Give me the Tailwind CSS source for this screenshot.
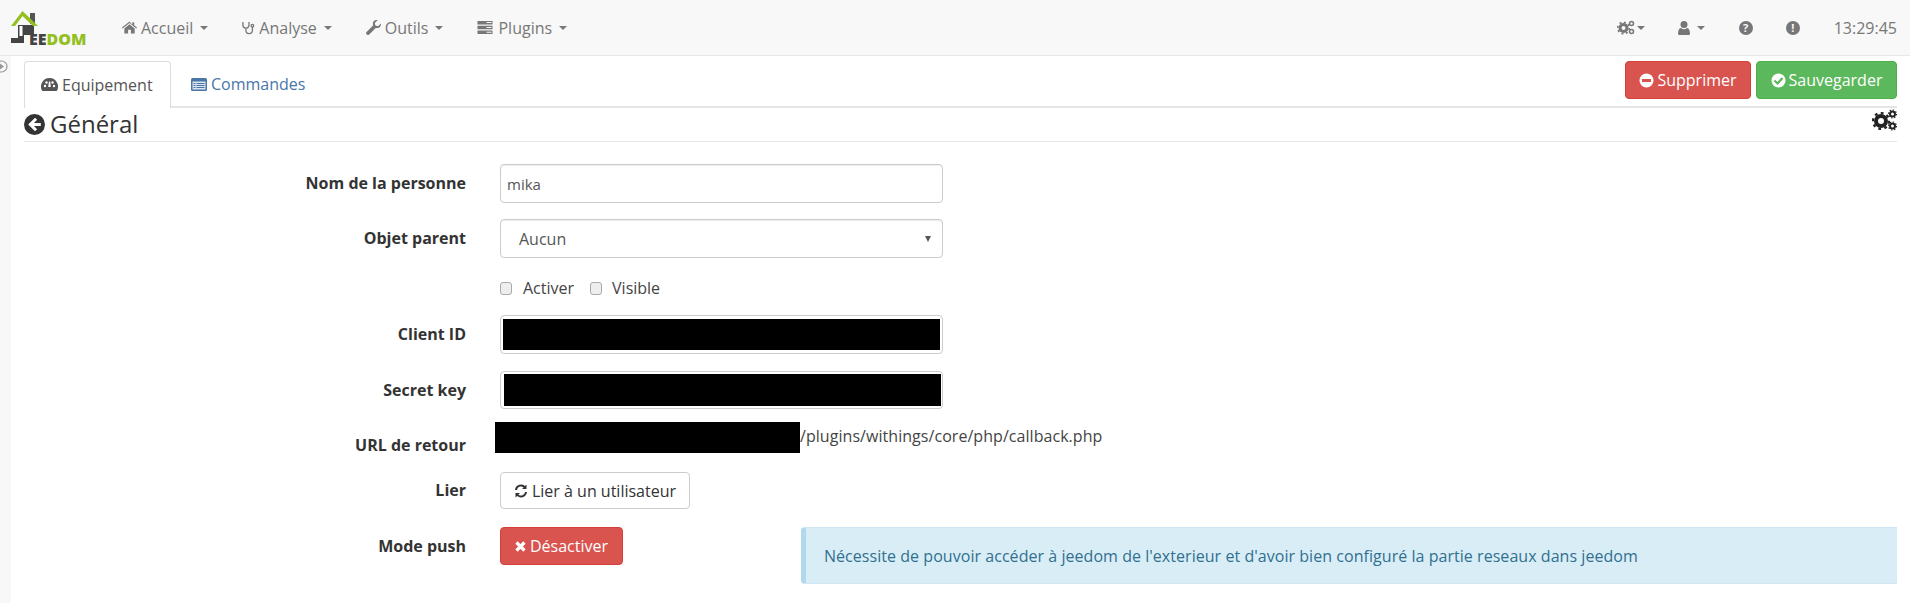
<!DOCTYPE html>
<html lang="fr"><head><meta charset="utf-8"><title>Jeedom</title>
<script src="https://cdn.jsdelivr.net/npm/@tailwindcss/browser@4"></script></head>
<body class="bg-white h-[603px] w-[1910px] overflow-hidden font-['Open_Sans',sans-serif] text-[16px] text-[#333]">
<nav class="h-[56px] bg-[#f8f8f8] border-b border-[#e7e7e7] flex items-center text-[#777] text-[16px] relative">
  <svg class="absolute left-[10px] top-[10px]" width="30" height="34" viewBox="0 0 30 34">
    <rect x="9" y="15" width="15" height="10" fill="#444"/><rect x="20" y="3" width="5" height="11" fill="#555"/>
    <path d="M1 16 L12.500 1 L28 16 L23 16 L12.500 6 L5 16Z" fill="#93c01f"/>
    <path d="M8 15h6v18H1v-5h7z" fill="#444"/><rect x="9.500" y="16" width="3" height="10" fill="#fff"/>
  </svg>
  <span class="absolute left-[29px] top-[29px] font-extrabold text-[#444] text-[16px] leading-[20px]">EE<span class="text-[#93c01f]">DOM</span></span>
  <div class="flex items-center ml-[122px]"><svg width="15" height="13" viewBox="0 0 16 13" fill="#777"><path d="M8 0 0 6.500l.8 1L8 1.800l7.200 5.700.8-1-3-2.400V1h-2v2.500zM2.500 7.500V13h4V9h3v4h4V7.500L8 3z"/></svg><span class="ml-[4px]">Accueil</span><i class="ml-[7px] w-0 h-0 border-x-[4px] border-x-transparent border-t-[4px] border-t-[#777]"></i></div>
  <div class="flex items-center ml-[34px]"><svg width="13" height="15" viewBox="0 0 14 15" fill="none" stroke="#777" stroke-width="1.400"><path d="M1 1.500v4a3.300 3.300 0 0 0 6.500 0v-4M4.200 9v1.500a3.500 3.500 0 0 0 7 0V7"/><circle cx="11.200" cy="5.500" r="1.400"/></svg><span class="ml-[4px]">Analyse</span><i class="ml-[7px] w-0 h-0 border-x-[4px] border-x-transparent border-t-[4px] border-t-[#777]"></i></div>
  <div class="flex items-center ml-[34px]"><svg width="15" height="15" viewBox="0 0 15 15" fill="#777"><path d="M14.800 3.500 12 6.200l-2.600-.7L8.800 3l2.800-2.800C9.500-.4 7.500.6 7 2.500c-.3 1-.1 2 .2 2.800L.6 11.900a1.600 1.600 0 0 0 0 2.300l.3.3a1.600 1.600 0 0 0 2.300 0l6.600-6.600c2.500.9 5.800-1.300 5-4.400z"/></svg><span class="ml-[4px]">Outils</span><i class="ml-[7px] w-0 h-0 border-x-[4px] border-x-transparent border-t-[4px] border-t-[#777]"></i></div>
  <div class="flex items-center ml-[34px]"><svg width="16" height="13" viewBox="0 0 15 13" fill="#777"><path d="M0 0h15v3.500H0zM0 4.700h15v3.500H0zM0 9.500h15V13H0z"/><path d="M9 1h5v1H9zM9 5.900h5v1H9zM9 10.700h5v1H9z" fill="#f8f8f8"/></svg><span class="ml-[5px]">Plugins</span><i class="ml-[7px] w-0 h-0 border-x-[4px] border-x-transparent border-t-[4px] border-t-[#777]"></i></div>
  <div class="ml-auto flex items-center pr-[13px]">
    <svg width="18" height="15" viewBox="0 0 18 15"><circle cx="6.500" cy="8" r="3.500" fill="none" stroke="#777" stroke-width="3"/><circle cx="6.500" cy="8" r="5.800" fill="none" stroke="#777" stroke-width="1.600" stroke-dasharray="2 2.500"/><circle cx="14.500" cy="3.500" r="2" fill="none" stroke="#777" stroke-width="1.500"/><circle cx="14.500" cy="11.500" r="2" fill="none" stroke="#777" stroke-width="1.500"/></svg>
    <i class="ml-[2px] w-0 h-0 border-x-[4px] border-x-transparent border-t-[4px] border-t-[#777]"></i>
    <svg class="ml-[33px]" width="12" height="14" viewBox="0 0 12 14" fill="#777"><circle cx="6" cy="3.500" r="3.500"/><path d="M0 12.500C0 9 1.500 7 3 7c1 .8 2 1.200 3 1.200S8 7.800 9 7c1.500 0 3 2 3 5.500 0 1-.7 1.500-1.500 1.500h-9C.7 14 0 13.500 0 12.500z"/></svg>
    <i class="ml-[7px] w-0 h-0 border-x-[4px] border-x-transparent border-t-[4px] border-t-[#777]"></i>
    <span class="ml-[34px] w-[14px] h-[14px] rounded-full bg-[#777] text-[#f8f8f8] text-[11px] font-bold leading-[14px] text-center">?</span>
    <span class="ml-[33px] w-[14px] h-[14px] rounded-full bg-[#777] text-[#f8f8f8] text-[11px] font-bold leading-[14px] text-center">!</span>
    <span class="ml-[34px] text-[16px]">13:29:45</span>
  </div>
</nav>
<div class="flex h-[547px]">
  <aside class="w-[11px] bg-[#f8f8f8] overflow-hidden shrink-0 pt-[4px]"><svg class="ml-[-5px]" width="13" height="13" viewBox="0 0 13 13"><circle cx="6.500" cy="6.500" r="5.500" fill="none" stroke="#999" stroke-width="1.200"/><path d="M5 3.500 9 6.500 5 9.500z" fill="#999"/></svg></aside>
  <main class="flex-1 pl-[13px] pr-[13px]">
    <div class="h-[52px] border-b-2 border-[#e5e5e5] flex pt-[5px] relative">
      <div class="w-[147px] h-[47px] mb-[-2px] border border-b-0 border-[#ddd] rounded-t bg-white flex items-center pb-[1px] pl-[16px] text-[#555] text-[16px]">
        <svg width="17" height="14" viewBox="0 0 17 14" fill="#555"><path d="M8.500 0a8.500 8.500 0 0 0-7.200 13h14.400A8.500 8.500 0 0 0 8.500 0z"/><circle cx="4" cy="8" r="1.200" fill="#fff"/><circle cx="5.500" cy="4.500" r="1.200" fill="#fff"/><circle cx="11.500" cy="4.500" r="1.200" fill="#fff"/><circle cx="13" cy="8" r="1.200" fill="#fff"/><path d="M8 3.500h1.200L9.800 9h-2.600z" fill="#fff"/></svg>
        <span class="ml-[4px]">Equipement</span></div>
      <div class="ml-[20px] flex items-center pb-[1px] text-[#4a76a8] text-[16px] h-[47px]">
        <svg width="16" height="13" viewBox="0 0 16 13"><rect width="16" height="13" rx="1.500" fill="#4a76a8"/><path d="M1.500 3.500h13V11.500h-13z" fill="#dbe5f0"/><path d="M2.500 5h2v1h-2zM5.500 5h8v1h-8zM2.500 7h2v1h-2zM5.500 7h8v1h-8zM2.500 9h2v1h-2zM5.500 9h8v1h-8z" fill="#4a76a8"/></svg>
        <span class="ml-[4px]">Commandes</span></div>
      <div class="ml-auto flex gap-[5px] h-[38px] text-white text-[16px]">
        <button class="w-[126px] rounded bg-[#d9534f] border border-[#d43f3a] flex items-center justify-center gap-[3px]"><svg width="15" height="15" viewBox="0 0 15 15"><circle cx="7.500" cy="7.500" r="7" fill="#fff"/><rect x="3" y="6" width="9" height="3" fill="#d9534f"/></svg>Supprimer</button>
        <button class="w-[141px] rounded bg-[#5cb85c] border border-[#4cae4c] flex items-center justify-center gap-[3px]"><svg width="15" height="15" viewBox="0 0 15 15"><circle cx="7.500" cy="7.500" r="7" fill="#fff"/><path d="M3.500 7.500 6.500 10.500 11.500 5" fill="none" stroke="#5cb85c" stroke-width="2.200"/></svg>Sauvegarder</button>
      </div>
    </div>
    <div class="h-[34px] border-b border-[#e5e5e5] flex items-center relative">
      <svg class="mt-[-1px]" width="21" height="21" viewBox="0 0 20 20"><circle cx="10" cy="10" r="10" fill="#333"/><path d="M10.500 3.500 4 10l6.500 6.500 2-2L9.500 11.500H16v-3H9.500l3-3z" fill="#fff"/></svg>
      <h2 class="ml-[5px] mb-[2px] text-[24px] font-normal text-[#333]">Général</h2>
      <svg class="ml-auto mt-[-10px]" width="25" height="22" viewBox="0 0 25 22"><circle cx="9" cy="12" r="5" fill="none" stroke="#222" stroke-width="4"/><circle cx="9" cy="12" r="8" fill="none" stroke="#222" stroke-width="2.200" stroke-dasharray="2.800 3.400"/><circle cx="20.500" cy="5" r="2.500" fill="none" stroke="#222" stroke-width="2"/><circle cx="20.500" cy="5" r="4" fill="none" stroke="#222" stroke-width="1.200" stroke-dasharray="1.400 1.700"/><circle cx="20.500" cy="17" r="2.500" fill="none" stroke="#222" stroke-width="2"/><circle cx="20.500" cy="17" r="4" fill="none" stroke="#222" stroke-width="1.200" stroke-dasharray="1.400 1.700"/></svg>
    </div>
    <form class="text-[16px]">
      <div class="flex items-center mt-[22px] h-[39px]">
        <label class="w-[442px] text-right font-bold shrink-0 mt-[-1px]">Nom de la personne</label>
        <div class="ml-[34px] w-[443px] h-[39px] border border-[#ccc] rounded flex items-center px-[6px] pt-[1px] text-[#555] text-[15px] shadow-[inset_0_1px_1px_rgba(0,0,0,0.075)]">mika</div>
      </div>
      <div class="flex items-center mt-[16px] h-[39px]">
        <label class="w-[442px] text-right font-bold shrink-0 mt-[-1px]">Objet parent</label>
        <div class="ml-[34px] w-[443px] h-[39px] border border-[#ccc] rounded flex items-center pl-[18px] pr-[11px] text-[#555] shadow-[inset_0_1px_1px_rgba(0,0,0,0.075)]">Aucun<i class="ml-auto w-0 h-0 border-x-[3px] border-x-transparent border-t-[6px] border-t-[#555]"></i></div>
      </div>
      <div class="flex items-center mt-[20px] h-[20px] pl-[476px] text-[#444]">
        <span class="w-[12px] h-[13px] border border-[#aaa] rounded-[3px] bg-[#eee]"></span><span class="ml-[11px]">Activer</span>
        <span class="ml-[16px] w-[12px] h-[13px] border border-[#aaa] rounded-[3px] bg-[#eee]"></span><span class="ml-[10px]">Visible</span>
      </div>
      <div class="flex items-center mt-[17px] h-[39px]">
        <label class="w-[442px] text-right font-bold shrink-0 mt-[-1px]">Client ID</label>
        <div class="ml-[34px] w-[443px] h-[39px] border border-[#ccc] rounded p-[3px]"><div class="h-[31px] mx-[-1px] bg-black"></div></div>
      </div>
      <div class="flex items-center mt-[17px] h-[38px]">
        <label class="w-[442px] text-right font-bold shrink-0 mt-[-1px]">Secret key</label>
        <div class="ml-[34px] w-[443px] h-[38px] border border-[#ccc] rounded p-[2px] pl-[3px] pr-[1px]"><div class="h-[32px] bg-black"></div></div>
      </div>
      <div class="flex items-start mt-[13px] h-[32px]">
        <label class="w-[442px] text-right font-bold shrink-0 mt-[11px]">URL de retour</label>
        <div class="ml-[29px] w-[305px] h-[31px] bg-black shrink-0"></div>
        <span class="mt-[2px] text-[#444] tracking-[0.05px]">/plugins/withings/core/php/callback.php</span>
      </div>
      <div class="flex items-center mt-[18px] h-[37px]">
        <label class="w-[442px] text-right font-bold shrink-0 mt-[-1px]">Lier</label>
        <button type="button" class="ml-[34px] w-[190px] h-[37px] border border-[#ccc] rounded bg-white flex items-center justify-center gap-[4px] text-[#333]"><svg width="14" height="14" viewBox="0 0 14 14" fill="none" stroke="#333" stroke-width="2"><path d="M2 6a5 5 0 0 1 9-2.500M12 8a5 5 0 0 1-9 2.500"/><path d="M12.500.5v4.500H8M1.500 13.500V9H6" fill="#333" stroke="none"/></svg>Lier à un utilisateur</button>
      </div>
      <div class="flex items-start mt-[18px]">
        <label class="w-[442px] text-right font-bold shrink-0 mt-[7px]">Mode push</label>
        <button type="button" class="ml-[34px] w-[123px] h-[38px] border border-[#d43f3a] rounded bg-[#d9534f] text-white flex items-center justify-center gap-[4px] shrink-0"><svg width="11" height="11" viewBox="0 0 11 11" stroke="#fff" stroke-width="3.200"><path d="M1.500 1.500l8 8M9.500 1.500l-8 8"/></svg>Désactiver</button>
        <div class="ml-[178px] flex-1 h-[57px] bg-[#d9edf7] border-l-[5px] border-[#b2d8ee] border-y border-y-[#cfe7f4] rounded-l flex items-center pl-[18px] text-[#31708f] text-[16px] tracking-[0.045px]">Nécessite de pouvoir accéder à jeedom de l'exterieur et d'avoir bien configuré la partie reseaux dans jeedom</div>
      </div>
    </form>
  </main>
</div>
</body></html>
